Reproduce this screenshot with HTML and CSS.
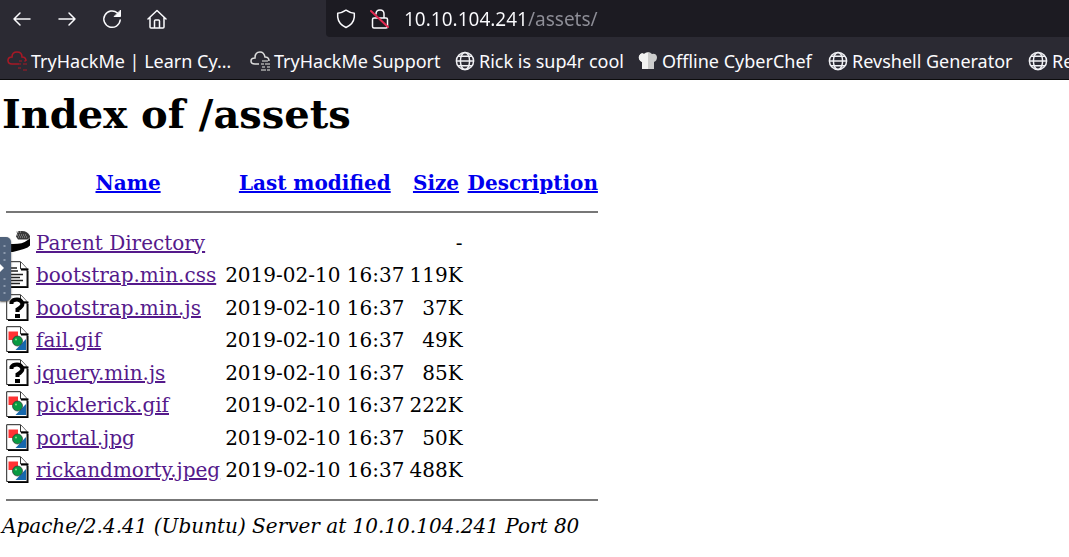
FILE: index.html
```html
<!DOCTYPE html>
<html lang="en">
<head>
<meta charset="utf-8">
<title>Index of /assets</title>
<link rel="stylesheet" href="styles.css">
</head>
<body>
<svg class="defs" aria-hidden="true">
  <symbol id="globe" viewBox="0 0 20 20"><g fill="none" stroke="#f0f0f4" stroke-width="1.5"><circle cx="10" cy="10" r="8.6"/><ellipse cx="10" cy="10" rx="4.6" ry="8.6"/><path d="M1.4 10h17.2M3 5.2h14M3 14.8h14"/></g></symbol>
  <symbol id="page" viewBox="0 0 24 28"><path d="M2 25h18V9l2.500 1v17H2z" fill="#000"/><path d="M.7.7h13.800l6.500 7v17.800H.7z" fill="#fff" stroke="#222"/><path d="M14.500 1v7H21" fill="#fff" stroke="#333"/><path d="M15 7.500h7.500v2H15z"/></symbol>
  <symbol id="image" viewBox="0 0 24 28"><use href="#page"/><path d="M2.500 5.500h9.500v8.500H2.500z" fill="#f33"/><path d="M20 13v11H9.500z" fill="#1668ad"/><circle cx="11.500" cy="15" r="5" fill="#079b43" stroke="#333" stroke-width=".7"/><circle cx="10" cy="13.500" r="1" fill="#8d8"/></symbol>
  <symbol id="unknown" viewBox="0 0 24 28"><use href="#page"/><path d="M5.500 10V8Q7 5.500 11 5.500t5.500 4q0 3-5 6V18" fill="none" stroke="#000" stroke-width="4"/><path d="M9 20h5v4H9z"/></symbol>
  <symbol id="text" viewBox="0 0 24 28"><use href="#page"/><path d="M4 7h7M4 10h8M4 13.500h13M4 16.500h10M4 19.500h13M4 22.500h10" stroke="#222" stroke-width="1.500"/></symbol>
  <symbol id="back" viewBox="0 0 24 28"><path d="M12 2h4q6 0 8.500 6l-3 2.500H12l-2-3z" fill="#3a3a3a"/><path d="M10 3h5M11 6h9M12 8h10" stroke="#aaa" stroke-dasharray="1 1"/><path d="M24.800 7v8q-1 3-7 5-7 2-11 3H3v-8h4q10 0 14-3.500 3-2 3.800-4.500z"/></symbol>
</svg>
<header class="browser">
  <div class="toolbar">
    <nav class="controls" aria-label="Browser controls">
      <button aria-label="Back"><svg viewBox="0 0 20 20"><path d="M18 10H2M8 4l-6 6 6 6"/></svg></button>
      <button aria-label="Forward"><svg viewBox="0 0 20 20"><path d="M2 10h16M12 4l6 6-6 6"/></svg></button>
      <button aria-label="Reload"><svg viewBox="0 0 20 20"><path d="M15.500 4A8.200 8.200 0 1 0 18.200 11"/><path d="M18.500 1.500v6h-6z" fill="#fbfbfe" stroke-width="1"/></svg></button>
      <button aria-label="Home"><svg viewBox="0 0 20 20"><path d="M1 10l9-8.500 9 8.500M3 8.500V18q0 1 1 1h12q1 0 1-1V8.500M7.500 19v-7q0-1 1-1h3q1 0 1 1v7"/></svg></button>
    </nav>
    <div class="address-bar">
      <svg class="bar-icon" viewBox="0 0 20 20"><path d="M10 1.200q4 2.800 8.300 3v4q-.8 7-8.300 10.300Q2.500 15.200 1.700 8.200v-4Q6 4 10 1.200z"/></svg>
      <svg class="bar-icon" viewBox="0 0 20 20"><path d="M6 5q0-4 4-4t4 4v4M4 9h12q1.500 0 1.500 1.500v7q0 1.500-1.500 1.500H4q-1.500 0-1.500-1.500v-7Q2.500 9 4 9"/><path d="M1 2l17 16" stroke="#e22850" stroke-width="2"/></svg>
      <input class="url" type="text" aria-label="Address" value="10.10.104.241/assets/">
    </div>
  </div>
  <nav class="bookmarks" aria-label="Bookmarks">
    <a href="#"><svg viewBox="0 0 20 20"><path d="M12 13H5Q1 13 1 9.500T5 6q0-5 5-5t5 5q4 0 4 4" fill="none" stroke="#a71926" stroke-width="1.600"/><path d="M12 10h3m2 0h2m-7 3h2m2 0h4M11 17h3m2 2h4" stroke="#a71926" stroke-width="1.200"/></svg>TryHackMe | Learn Cy…</a>
    <a href="#"><svg viewBox="0 0 20 20"><path d="M9 13H5Q1 13 1 10t4-3q0-6 5-6 4 0 5 5 4 0 4 4" fill="none" stroke="#ddd" stroke-width="1.500"/><path d="M12 10h6M11 13h3m1 0h5M12 16h3m2 0h3M11 19h5m1 0h3" stroke="#aaa" stroke-width="1.500"/></svg>TryHackMe Support</a>
    <a href="#"><svg viewBox="0 0 20 20"><use href="#globe"/></svg>Rick is sup4r cool</a>
    <a href="#"><svg viewBox="0 0 20 20"><path d="M4 18v-7Q0 9 1 5q2-4 5-2 4-4 8 0 4-1 5 3 0 4-3 5v7z" fill="#ccc"/><path d="M10 2v16H4v-7Q0 9 1 5q2-4 5-2l2-1z" fill="#f2f2f2"/></svg>Offline CyberChef</a>
    <a href="#"><svg viewBox="0 0 20 20"><use href="#globe"/></svg>Revshell Generator</a>
    <a href="#"><svg viewBox="0 0 20 20"><use href="#globe"/></svg>Re</a>
  </nav>
</header>
<main>
  <h1>Index of /assets</h1>
  <table>
    <thead>
      <tr><th></th><th><a href="#">Name</a></th><th><a href="#">Last modified</a></th><th><a href="#">Size</a></th><th><a href="#">Description</a></th></tr>
      <tr class="rule"><td colspan="5"><hr></td></tr>
    </thead>
    <tbody>
      <tr><td><svg><use href="#back"/></svg></td><td><a href="#">Parent Directory</a></td><td></td><td>-</td><td></td></tr>
      <tr><td><svg><use href="#text"/></svg></td><td><a href="#">bootstrap.min.css</a></td><td>2019-02-10 16:37</td><td>119K</td><td></td></tr>
      <tr><td><svg><use href="#unknown"/></svg></td><td><a href="#">bootstrap.min.js</a></td><td>2019-02-10 16:37</td><td>37K</td><td></td></tr>
      <tr><td><svg><use href="#image"/></svg></td><td><a href="#">fail.gif</a></td><td>2019-02-10 16:37</td><td>49K</td><td></td></tr>
      <tr><td><svg><use href="#unknown"/></svg></td><td><a href="#">jquery.min.js</a></td><td>2019-02-10 16:37</td><td>85K</td><td></td></tr>
      <tr><td><svg><use href="#image"/></svg></td><td><a href="#">picklerick.gif</a></td><td>2019-02-10 16:37</td><td>222K</td><td></td></tr>
      <tr><td><svg><use href="#image"/></svg></td><td><a href="#">portal.jpg</a></td><td>2019-02-10 16:37</td><td>50K</td><td></td></tr>
      <tr><td><svg><use href="#image"/></svg></td><td><a href="#">rickandmorty.jpeg</a></td><td>2019-02-10 16:37</td><td>488K</td><td></td></tr>
    </tbody>
    <tfoot><tr class="rule"><td colspan="5"><hr></td></tr></tfoot>
  </table>
  <address>Apache/2.4.41 (Ubuntu) Server at 10.10.104.241 Port 80</address>
</main>
<button class="drawer" aria-label="Open side panel"><svg viewBox="0 0 12 64"><path d="M0 27l4 4-4 4z" fill="#fff"/><path d="M4.500 8v20M4.500 41v20" stroke="#8b99ad" stroke-width="2" stroke-dasharray="2 5"/></svg></button>
</body>
</html>
```
FILE: styles.css
```css
* { box-sizing: border-box; }
body {
  margin: 0;
  background: #fff;
  color: #000;
  font: 20px/24px "DejaVu Serif", serif;
  overflow: hidden;
}
.defs { position: absolute; width: 0; height: 0; }
.browser {
  background: #2b2a33;
  border-bottom: 1px solid #0c0c0d;
  color: #fbfbfe;
  font: 18px/24px "Noto Sans", sans-serif;
}
.toolbar { display: flex; height: 37px; }
.controls {
  display: flex;
  align-items: center;
  flex: 0 0 326px;
  gap: 25px;
  padding-left: 12px;
}
.controls button { width: 20px; height: 20px; padding: 0; border: 0; background: none; }
.controls svg, .bar-icon {
  display: block;
  width: 20px;
  height: 20px;
  fill: none;
  stroke: #fbfbfe;
  stroke-width: 1.5;
  stroke-linecap: round;
  stroke-linejoin: round;
}
.address-bar {
  display: flex;
  align-items: center;
  flex: 1;
  gap: 14px;
  padding-left: 10px;
  background: #1c1b22;
  border-bottom-left-radius: 4px;
}
.bar-icon { flex: none; }
.url {
  flex: 1;
  min-width: 0;
  padding: 0;
  border: 0;
  font: inherit;
  font-size: 19px;
  color: transparent;
  caret-color: #fbfbfe;
  background: linear-gradient(90deg, #fbfbfe 124px, #8f8f98 124px);
  background-clip: text;
}
.bookmarks {
  display: grid;
  grid-template-columns: 243px 205px 183px 190px 200px auto;
  align-items: center;
  height: 42px;
  padding: 6px 0 0 7px;
  white-space: nowrap;
  overflow: hidden;
}
.bookmarks a {
  display: flex;
  align-items: center;
  gap: 4px;
  color: #fbfbfe;
  text-decoration: none;
}
.bookmarks svg { width: 20px; height: 20px; flex: none; }
main { padding-top: 10px; }
h1 { margin: 0 2px 30px; font-size: 40px; line-height: 48px; }
table { margin-left: 6px; border-spacing: 0; }
th, td { padding: 0 0 0 5px; text-align: left; white-space: nowrap; }
th { text-align: center; height: 30px; }
th:first-child, td:first-child { padding-left: 0; }
th:nth-child(2), td:nth-child(2) { padding-left: 6px; }
td:nth-child(4) { text-align: right; }
th a { color: #00e; }
td a { color: #551a8b; }
tbody tr { height: 33px; }
tbody tr:nth-child(even) { height: 32px; }
td svg { display: block; width: 24px; height: 28px; }
.rule td { height: 28px; padding: 0; }
hr { margin: 0; border: 0; border-top: 2px solid #777; }
address { margin-left: 2px; }
.drawer {
  position: absolute;
  left: 0;
  top: 237px;
  width: 11px;
  height: 64px;
  padding: 0;
  border: 0;
  border-radius: 0 5px 5px 0;
  background: #50627b;
  box-shadow: 0 1px 2px #555;
}
.drawer svg { display: block; width: 12px; height: 64px; }
```
